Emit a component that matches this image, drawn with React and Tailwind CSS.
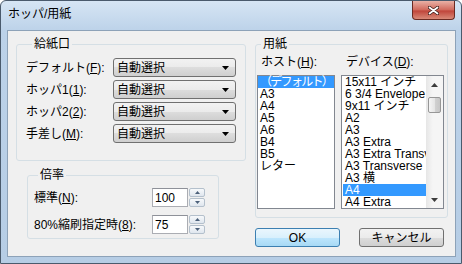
import React from "react";

const hostItems = ["（デフォルト）", "A3", "A4", "A5", "A6", "B4", "B5", "レター"];
const deviceItems = [
  "15x11 インチ",
  "6 3/4 Envelope",
  "9x11 インチ",
  "A2",
  "A3",
  "A3 Extra",
  "A3 Extra Transverse",
  "A3 Transverse",
  "A3 横",
  "A4",
  "A4 Extra",
];

const feeds = [
  { label: "デフォルト", key: "F" },
  { label: "ホッパ1", key: "1" },
  { label: "ホッパ2", key: "2" },
  { label: "手差し", key: "M" },
];

const Group = ({ title, legendClass, className, children }) => (
  <fieldset className={`min-w-0 rounded-[3px] border border-[#d5dfe5] ${className}`}>
    <legend className={`px-[2px] leading-[14px] ${legendClass}`}>{title}</legend>
    {children}
  </fieldset>
);

const Combo = () => (
  <div className="flex items-center w-[123px] h-[19px] rounded-[3px] border border-[#707070] bg-[linear-gradient(#f2f2f2_0%,#ebebeb_50%,#dddddd_50%,#cfcfcf_100%)] pl-[3px] pr-[6px]">
    <span className="flex-1">自動選択</span>
    <svg width="7" height="4" viewBox="0 0 7 4">
      <path d="M0 0h7L3.5 4z" fill="#000" />
    </svg>
  </div>
);

const SpinArrow = ({ up }) => (
  <div className="flex items-center justify-center h-[9px] rounded-[2px] border border-[#b4c0cc] bg-[linear-gradient(#f7f9fb,#dfe6ee)]">
    <svg width="5" height="3" viewBox="0 0 5 3">
      <path d={up ? "M0 3h5L2.5 0z" : "M0 0h5L2.5 3z"} fill="#4c607a" />
    </svg>
  </div>
);

const Spin = ({ value }) => (
  <div className="flex h-[19px]">
    <div className="flex items-center w-[36px] h-full border border-[#abadb3] border-t-[#8e9199] bg-white pl-[2px]">
      {value}
    </div>
    <div className="flex flex-col justify-between w-[16px] h-full ml-[1px]">
      <SpinArrow up />
      <SpinArrow />
    </div>
  </div>
);

const Arrow = ({ up }) => (
  <div className="flex items-center justify-center h-[17px]">
    <svg width="7" height="4" viewBox="0 0 7 4">
      <path d={up ? "M0 4h7L3.5 0z" : "M0 0h7L3.5 4z"} fill="#3c3c3c" />
    </svg>
  </div>
);

const Button = ({ children, primary }) => (
  <button
    className={
      primary
        ? "w-[85px] h-[19px] rounded-[3px] border border-[#3c7fb1] bg-[linear-gradient(#eaf6fd_0%,#d9f0fc_50%,#bee6fd_50%,#a7d9f5_100%)] leading-[12px]"
        : "w-[85px] h-[19px] rounded-[3px] border border-[#707070] bg-[linear-gradient(#f2f2f2_0%,#ebebeb_50%,#dddddd_50%,#cfcfcf_100%)] leading-[12px]"
    }
  >
    {children}
  </button>
);

export default function App() {
  return (
    <div className="w-[462px] h-[264px] overflow-hidden bg-white text-[12px] leading-[12px] text-black font-['Liberation_Sans','Noto_Sans_CJK_JP',sans-serif]">
      <div className="flex flex-col w-[462px] h-[264px] rounded-t-[6px] border border-[#4a5a6c] bg-[linear-gradient(#d6e5f4,#bcd2e9_30px,#b6cde5)]">
        {/* title bar */}
        <div className="flex items-start h-[29px]">
          <span className="mt-[6px] pl-[7px] leading-[14px]">ホッパ/用紙</span>
          <div className="flex items-center justify-center ml-auto mr-[6px] w-[43px] h-[19px] rounded-b-[4px] border border-t-0 border-[#6b2a22] bg-[linear-gradient(#e9b1a6,#d0685b_50%,#c0453a_55%,#d98a78)]">
            <svg width="11" height="9" viewBox="0 0 11 9">
              <path d="M1.5 1.5l8 6M9.5 1.5l-8 6" stroke="#3a1a16" strokeWidth="3.4" strokeLinecap="round" />
              <path d="M1.5 1.5l8 6M9.5 1.5l-8 6" stroke="#fff" strokeWidth="1.8" strokeLinecap="round" />
            </svg>
          </div>
        </div>

        {/* client area */}
        <div className="flex ml-[6px] w-[449px] h-[227px] border border-[#8da2b8] bg-[#f0f0f0] pl-[8px] pt-[6px]">
          {/* left column */}
          <div className="flex flex-col w-[230px]">
            <Group title="給紙口" legendClass="ml-[6px]" className="w-[230px] h-[124px] pt-[7px] pl-[9px]">
              <div className="flex flex-col gap-[3px]">
                {feeds.map((f) => (
                  <div key={f.key} className="flex items-center h-[19px]">
                    <span className="w-[87px]">
                      {f.label}(<u>{f.key}</u>):
                    </span>
                    <Combo />
                  </div>
                ))}
              </div>
            </Group>

            <Group title="倍率" legendClass="ml-[4px]" className="mt-[7px] ml-[11px] w-[192px] h-[71px] pt-[6px] pl-[6px]">
              <div className="flex flex-col gap-[8px]">
                <div className="flex items-center">
                  <span className="w-[118px]">
                    標準(<u>N</u>):
                  </span>
                  <Spin value="100" />
                </div>
                <div className="flex items-center">
                  <span className="w-[118px]">
                    80%縮刷指定時(<u>8</u>):
                  </span>
                  <Spin value="75" />
                </div>
              </div>
            </Group>
          </div>

          {/* right column */}
          <div className="flex flex-col ml-[9px] w-[193px]">
            <Group title="用紙" legendClass="ml-[4px]" className="w-[193px] h-[181px] pt-[5px] pl-[1px]">
              <div className="grid grid-cols-[78px_103px] gap-x-[6px]">
                <span className="pl-[4px] h-[12px]">
                  ホスト(<u>H</u>):
                </span>
                <span className="pl-[5px] h-[12px]">
                  デバイス(<u>D</u>):
                </span>

                <div className="mt-[7px] h-[134px] border border-[#828790] bg-white">
                  {hostItems.map((item, i) => (
                    <div
                      key={item}
                      className={
                        i === 0
                          ? "h-[12px] pl-[2px] whitespace-nowrap bg-[#3399ff] text-white tracking-[-1.7px]"
                          : "h-[12px] pl-[2px] whitespace-nowrap"
                      }
                    >
                      {item}
                    </div>
                  ))}
                </div>

                <div className="flex mt-[7px] h-[134px] border border-[#828790] bg-white">
                  <div className="flex-1 min-w-0 overflow-hidden pl-[1px]">
                    {deviceItems.map((item) => (
                      <div
                        key={item}
                        className={
                          item === "A4"
                            ? "h-[12px] pl-[2px] whitespace-nowrap bg-[#3399ff] text-white"
                            : "h-[12px] pl-[2px] whitespace-nowrap"
                        }
                      >
                        {item}
                      </div>
                    ))}
                  </div>
                  <div className="flex flex-col w-[17px] bg-[linear-gradient(90deg,#e6e6e6,#f5f5f5_40%,#f5f5f5)]">
                    <Arrow up />
                    <div className="mt-[4px] mx-[2px] h-[16px] rounded-[2px] border border-[#979797] bg-[linear-gradient(90deg,#f5f5f5,#e5e5e5_50%,#d2d2d2_51%,#c6c6c6)]" />
                    <div className="flex-1" />
                    <Arrow />
                  </div>
                </div>
              </div>
            </Group>

            <div className="flex gap-[19px] mt-[10px]">
              <Button primary>OK</Button>
              <Button>キャンセル</Button>
            </div>
          </div>
        </div>
      </div>
    </div>
  );
}
